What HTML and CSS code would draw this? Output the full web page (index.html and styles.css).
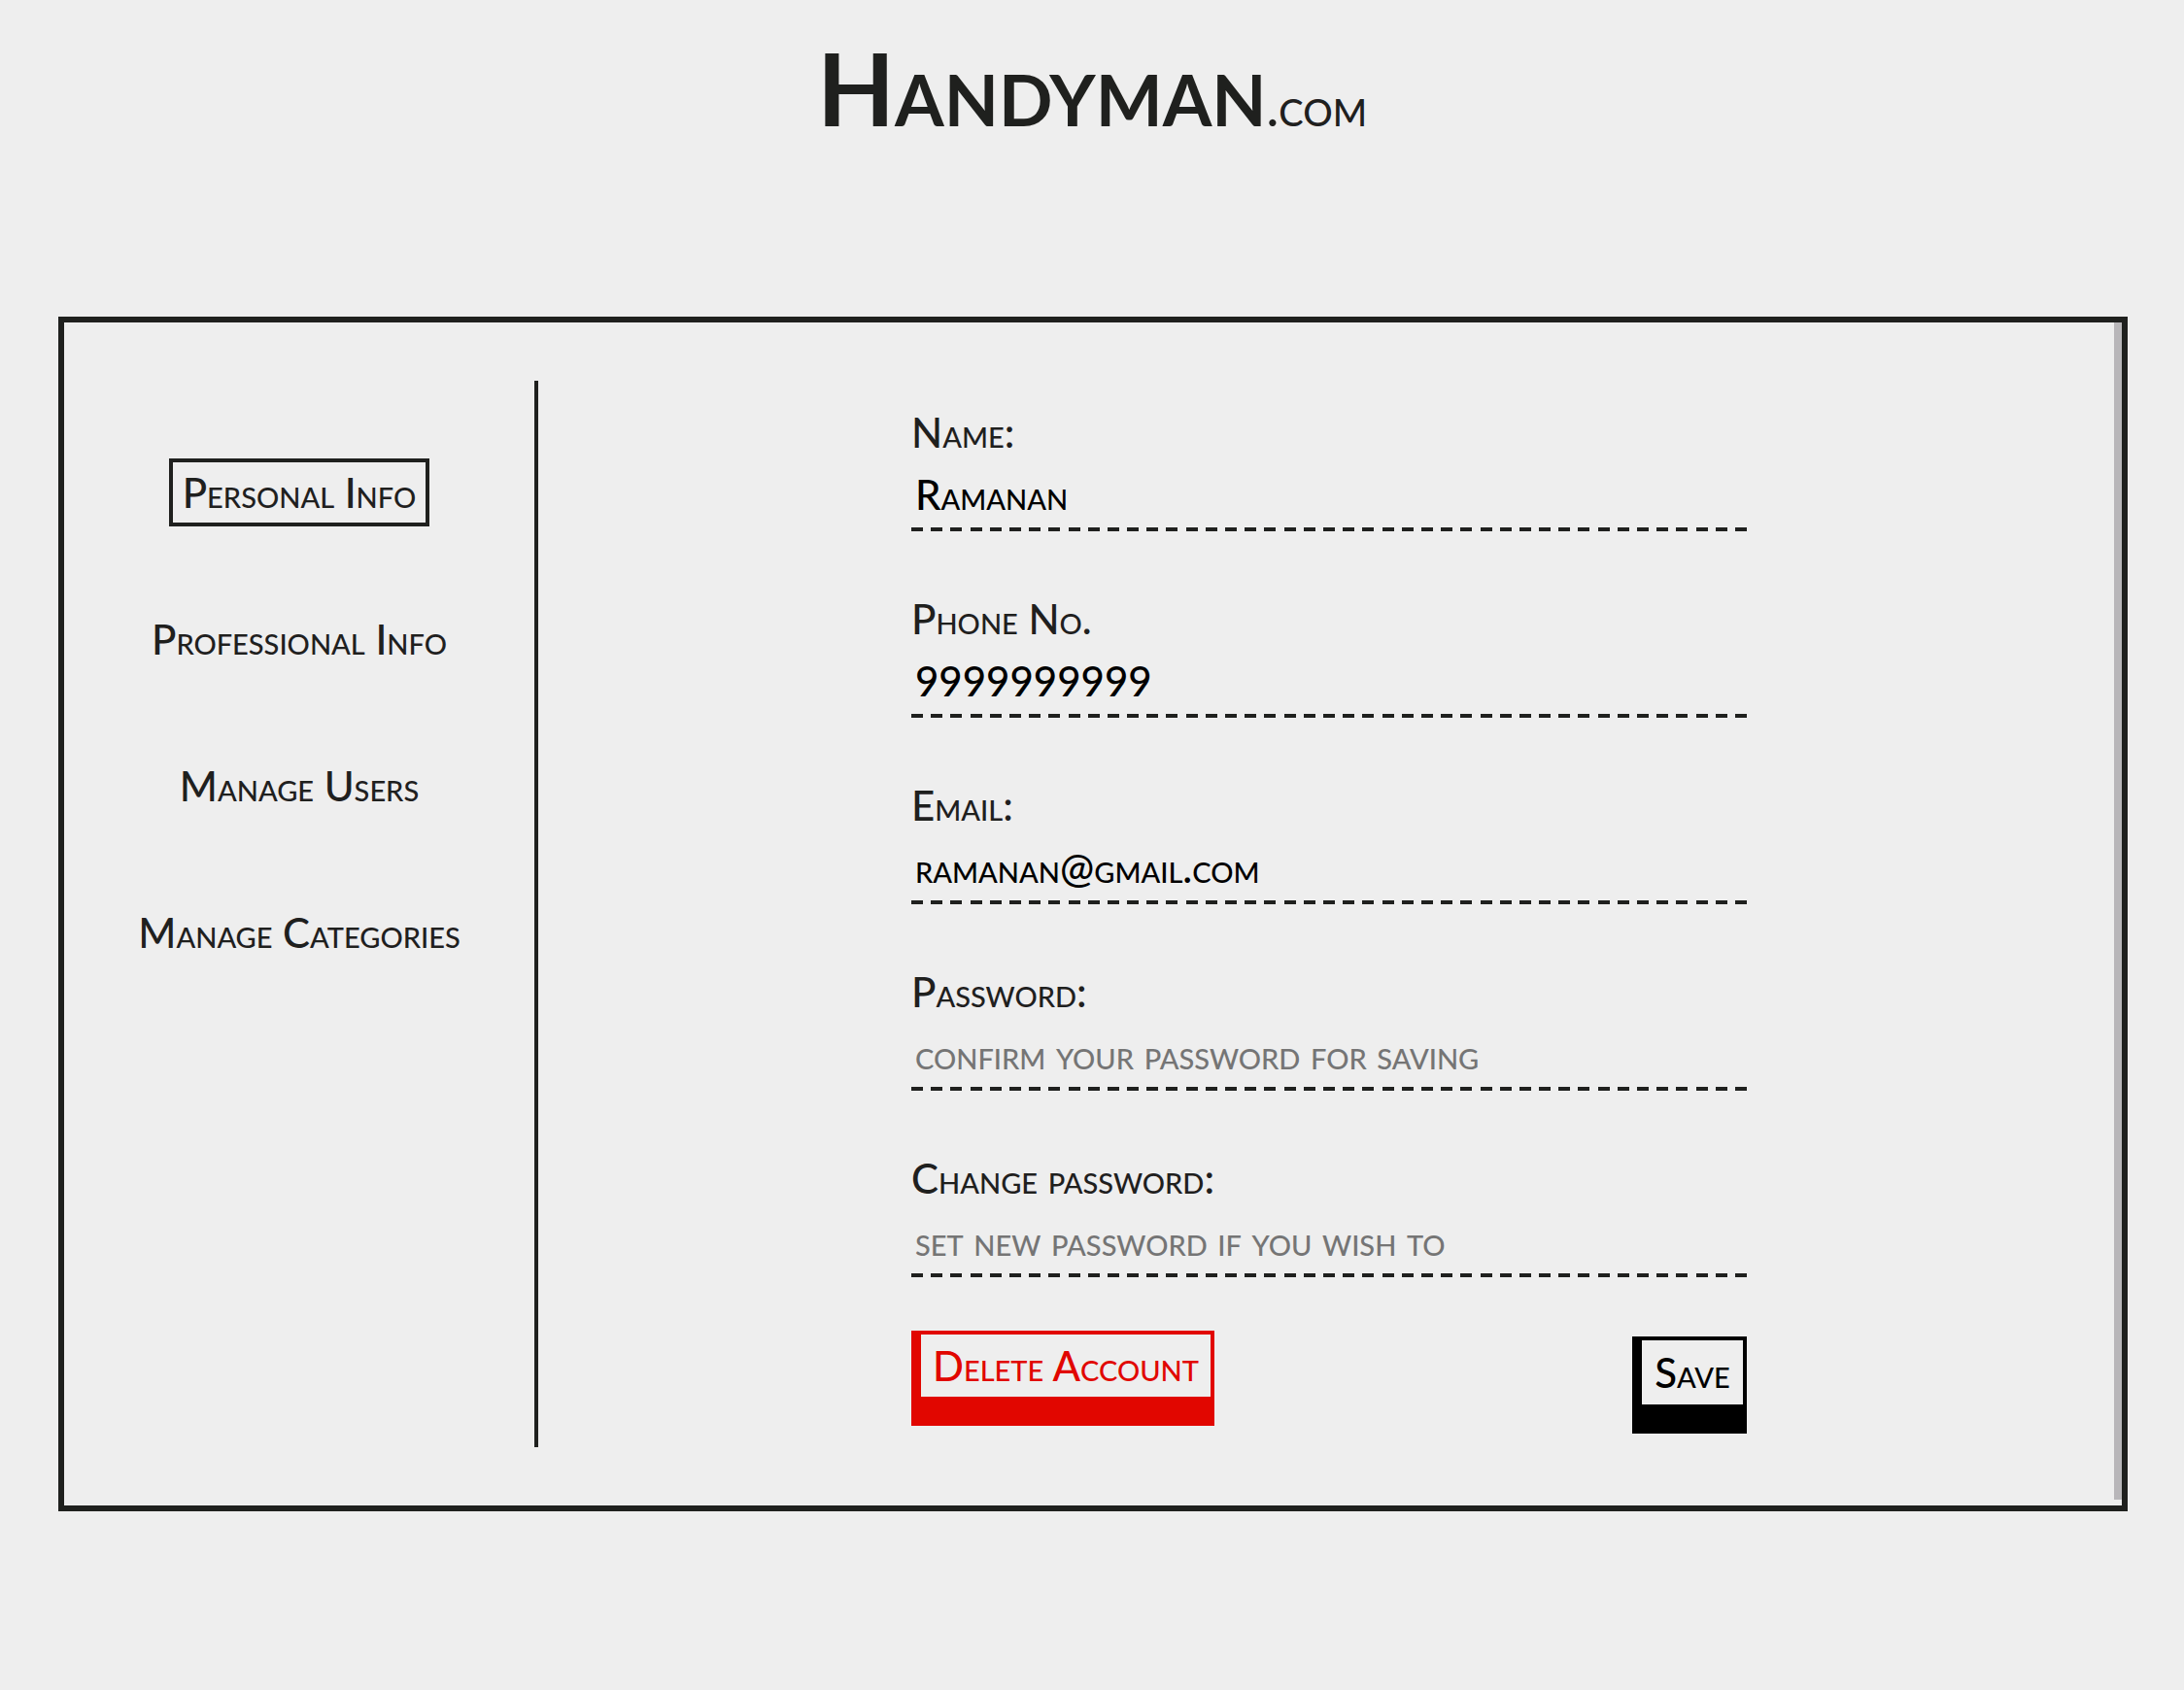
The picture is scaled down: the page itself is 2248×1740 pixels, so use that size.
FILE: index.html
```html
<!DOCTYPE html>
<html lang="en">
<head>
<meta charset="utf-8">
<title>Handyman.com</title>
<link rel="stylesheet" href="styles.css">
</head>
<body>
<header class="header">
  <h1 class="logo">Handyman<span class="logo-suffix">.com</span></h1>
</header>
<main class="panel">
  <div class="content">
    <nav class="sidebar">
      <button class="tab tab-active" type="button">Personal Info</button>
      <button class="tab" type="button">Professional Info</button>
      <button class="tab" type="button">Manage Users</button>
      <button class="tab" type="button">Manage Categories</button>
    </nav>
    <form class="form">
      <div class="field">
        <label class="label" for="name">Name:</label>
        <input class="input" id="name" type="text" value="Ramanan">
      </div>
      <div class="field">
        <label class="label" for="phone">Phone No.</label>
        <input class="input" id="phone" type="tel" value="9999999999">
      </div>
      <div class="field">
        <label class="label" for="email">Email:</label>
        <input class="input" id="email" type="email" value="ramanan@gmail.com">
      </div>
      <div class="field">
        <label class="label" for="password">Password:</label>
        <input class="input" id="password" type="password" placeholder="confirm your password for saving">
      </div>
      <div class="field">
        <label class="label" for="new-password">Change password:</label>
        <input class="input" id="new-password" type="password" placeholder="set new password if you wish to">
      </div>
      <div class="actions">
        <button class="button button-delete" type="button">Delete Account</button>
        <button class="button button-save" type="submit">Save</button>
      </div>
    </form>
  </div>
  <div class="scrollbar"></div>
</main>
</body>
</html>
```
FILE: styles.css
```css
* {
  box-sizing: border-box;
}

body {
  margin: 0;
  background: #eee;
  color: #1f201e;
  font-family: Lato, sans-serif;
  font-size: 42px;
  font-weight: 500;
  font-variant: small-caps;
}

button,
input {
  font: inherit;
  color: inherit;
  background: none;
  border-radius: 0;
}

.header {
  display: flex;
  justify-content: center;
  padding-top: 20px;
  margin-bottom: 166px;
}

.logo {
  margin: 0;
  font-size: 104px;
  font-weight: bold;
  line-height: 140px;
}

.logo-suffix {
  font-size: 54px;
  font-weight: 500;
  line-height: 1;
}

.panel {
  display: flex;
  margin: 0 58px 60px 60px;
  border: 6px solid #1f201e;
}

.content {
  flex: 1;
  display: flex;
  padding: 60px 0;
}

.sidebar {
  flex: 0 0 488px;
  display: flex;
  flex-direction: column;
  align-items: center;
  gap: 81px;
  padding-top: 80px;
  border-right: 4px solid #1f201e;
}

.tab {
  height: 70px;
  padding: 0 10px;
  border: 4px solid transparent;
  line-height: 60px;
  white-space: nowrap;
}

.tab-active {
  border-color: #1f201e;
}

.form {
  flex: 1;
  display: flex;
  flex-direction: column;
  gap: 66px;
  padding: 29px 378px 14px 384px;
}

.field {
  display: flex;
  flex-direction: column;
}

.label {
  line-height: 48px;
}

.input {
  width: 100%;
  height: 78px;
  padding: 6px 4px 4px;
  border: 0;
  outline: 0;
  color: #000;
  background: repeating-linear-gradient(90deg, #1f201e 0 12px, transparent 12px calc((100% - 12px) / 42)) bottom / 100% 4px no-repeat;
}

.input::placeholder {
  color: #757575;
  opacity: 1;
}

.actions {
  display: flex;
  justify-content: space-between;
  align-items: flex-end;
  margin-top: -11px;
}

.button {
  height: 98px;
  padding: 0;
  border: solid;
  border-width: 4px 4px 30px 10px;
  white-space: nowrap;
}

.button-delete {
  width: 312px;
  margin-bottom: 8px;
  border-color: #e10600;
  color: #e10600;
}

.button-save {
  width: 118px;
  height: 100px;
  border-color: #000;
  color: #000;
}

.scrollbar {
  width: 8px;
  margin-bottom: 6px;
  background: #b8b6b9;
}
```
